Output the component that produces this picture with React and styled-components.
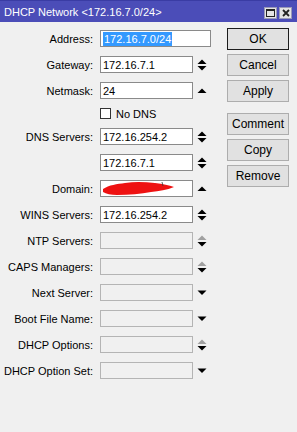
import React from 'react';
import styled, { createGlobalStyle } from 'styled-components';

const GlobalStyle = createGlobalStyle`
    html, body {
        margin: 0;
        padding: 0;
        background: #f0f0f0;
    }
    body {
        font-family: "Liberation Sans", Arial, sans-serif;
        font-size: 11px;
        color: #000;
    }
`;

const Window = styled.div`
    width: 297px;
    height: 432px;
    background: #f0f0f0;
    overflow: hidden;
`;

const TitleBar = styled.div`
    height: 22px;
    background: #4b4db8;
    border-top: 1px solid #3a3ca4;
    box-sizing: border-box;
    display: flex;
    align-items: center;
    padding: 0 5px 0 4px;
    color: #fff;
    font-size: 11px;
`;

const Title = styled.div`
    flex: 1;
    white-space: nowrap;
`;

const TitleButtons = styled.div`
    display: flex;
    gap: 2px;
    margin-top: 3px;
`;

const TitleButton = styled.div`
    width: 13px;
    height: 12px;
    box-sizing: border-box;
    background: #e4e4e4;
    border: 1px solid #9a9ab8;
    display: flex;
    align-items: center;
    justify-content: center;
`;

const Body = styled.div`
    display: flex;
    align-items: flex-start;
`;

const Form = styled.div`
    display: flex;
    flex-direction: column;
    gap: 9px;
    padding-top: 8px;
    width: 227px;
`;

const Row = styled.div`
    display: flex;
    align-items: center;
    height: 17px;
`;

const Label = styled.div`
    width: 93px;
    text-align: right;
    white-space: nowrap;
    margin-right: 7px;
`;

const Field = styled.div`
    position: relative;
    width: ${p => p.$w || 93}px;
    height: 17px;
    box-sizing: border-box;
    border: 1px solid ${p => (p.$disabled ? '#b4b4b4' : '#8a8a8a')};
    background: ${p => (p.$disabled ? '#f0f0f0' : '#fff')};
    display: flex;
    align-items: center;
    padding-left: 2px;
    white-space: nowrap;
    overflow: hidden;
`;

const Selected = styled.span`
    background: #3399ff;
    color: #fff;
    padding: 0 1px;
    line-height: 14px;
`;

const ArrowBox = styled.div`
    width: 10px;
    margin-left: 4px;
    display: flex;
    align-items: center;
    justify-content: center;
`;

const CheckRow = styled.div`
    display: flex;
    align-items: center;
    height: 11px;
    padding-left: 100px;
`;

const Check = styled.div`
    width: 11px;
    height: 11px;
    box-sizing: border-box;
    border: 1px solid #333;
    background: #fff;
    margin-right: 5px;
`;

const Buttons = styled.div`
    display: flex;
    flex-direction: column;
    gap: 4px;
    padding-top: 6px;
`;

const Button = styled.div`
    width: 62px;
    height: 22px;
    box-sizing: border-box;
    border: 1px solid ${p => (p.$default ? '#1c1c1c' : '#adadad')};
    background: #e1e1e1;
    display: flex;
    align-items: center;
    justify-content: center;
    font-size: 12px;
    margin-top: ${p => p.$gap || 0}px;
`;

const ScribbleSvg = styled.svg`
    position: absolute;
    left: 0;
    top: 0;
    display: block;
    width: 80px;
    height: 15px;
    min-height: 15px;
    flex: none;
`;

const Arrow = ({ up, down, upGray }) => {
    if (up && down) {
        return (
            <svg width="10" height="12" viewBox="0 0 10 12">
                <polygon points="0.5,5 5,0.5 9.5,5" fill={upGray ? '#a0a0a0' : '#000'} />
                <polygon points="0.5,7 9.5,7 5,11.5" fill="#000" />
            </svg>
        );
    }
    if (up) {
        return (
            <svg width="10" height="6" viewBox="0 0 10 6">
                <polygon points="0.5,5 5,0.5 9.5,5" fill="#000" />
            </svg>
        );
    }
    return (
        <svg width="10" height="6" viewBox="0 0 10 6">
            <polygon points="0.5,0.5 9.5,0.5 5,5" fill="#000" />
        </svg>
    );
};

// red redaction scribble over the domain value
const Scribble = () => (
    <ScribbleSvg viewBox="0 0 80 15" preserveAspectRatio="none">
        <path
            d="M2 8 C8 4, 16 3, 24 2 C34 0.5, 44 1, 54 2 C62 3, 68 4, 73 6 C66 9, 58 10, 50 11 C40 13, 28 14, 16 14 C10 14, 5 13, 2 11 Z"
            fill="#ee1111"
        />
        <path d="M61 1 L62 5" stroke="#333" strokeWidth="0.8" />
    </ScribbleSvg>
);

const rows = [
    { label: 'Gateway:', value: '172.16.7.1', arrow: { up: true, down: true } },
    { label: 'Netmask:', value: '24', arrow: { up: true } },
];

const rows2 = [
    { label: 'DNS Servers:', value: '172.16.254.2', arrow: { up: true, down: true } },
    { label: '', value: '172.16.7.1', arrow: { up: true, down: true } },
    { label: 'Domain:', value: '', scribble: true, arrow: { up: true } },
    { label: 'WINS Servers:', value: '172.16.254.2', arrow: { up: true, down: true } },
    { label: 'NTP Servers:', disabled: true, arrow: { up: true, down: true, upGray: true } },
    { label: 'CAPS Managers:', disabled: true, arrow: { up: true, down: true, upGray: true } },
    { label: 'Next Server:', disabled: true, arrow: { down: true } },
    { label: 'Boot File Name:', disabled: true, arrow: { down: true } },
    { label: 'DHCP Options:', disabled: true, arrow: { up: true, down: true, upGray: true } },
    { label: 'DHCP Option Set:', disabled: true, arrow: { down: true } },
];

const FieldRow = ({ row }) => (
    <Row>
        <Label>{row.label}</Label>
        <Field $disabled={row.disabled}>
            {row.scribble && <Scribble />}
            {row.value}
        </Field>
        <ArrowBox>
            <Arrow {...row.arrow} />
        </ArrowBox>
    </Row>
);

const App = () => {
    return (
        <Window>
            <GlobalStyle />
            <TitleBar>
                <Title>DHCP Network &lt;172.16.7.0/24&gt;</Title>
                <TitleButtons>
                    <TitleButton>
                        <svg width="9" height="8" viewBox="0 0 9 8">
                            <rect x="0.5" y="0.5" width="8" height="7" fill="none" stroke="#222" />
                            <line x1="0" y1="1.5" x2="9" y2="1.5" stroke="#222" />
                        </svg>
                    </TitleButton>
                    <TitleButton>
                        <svg width="8" height="8" viewBox="0 0 8 8">
                            <path d="M1 1 L7 7 M7 1 L1 7" stroke="#222" strokeWidth="1.8" />
                        </svg>
                    </TitleButton>
                </TitleButtons>
            </TitleBar>
            <Body>
                <Form>
                    <Row>
                        <Label>Address:</Label>
                        <Field $w={111}>
                            <Selected>172.16.7.0/24</Selected>
                        </Field>
                    </Row>
                    {rows.map((r, i) => <FieldRow key={i} row={r} />)}
                    <CheckRow>
                        <Check />
                        No DNS
                    </CheckRow>
                    {rows2.map((r, i) => <FieldRow key={i} row={r} />)}
                </Form>
                <Buttons>
                    <Button $default>OK</Button>
                    <Button>Cancel</Button>
                    <Button>Apply</Button>
                    <Button $gap={7}>Comment</Button>
                    <Button>Copy</Button>
                    <Button>Remove</Button>
                </Buttons>
            </Body>
        </Window>
    );
};

export default App;
